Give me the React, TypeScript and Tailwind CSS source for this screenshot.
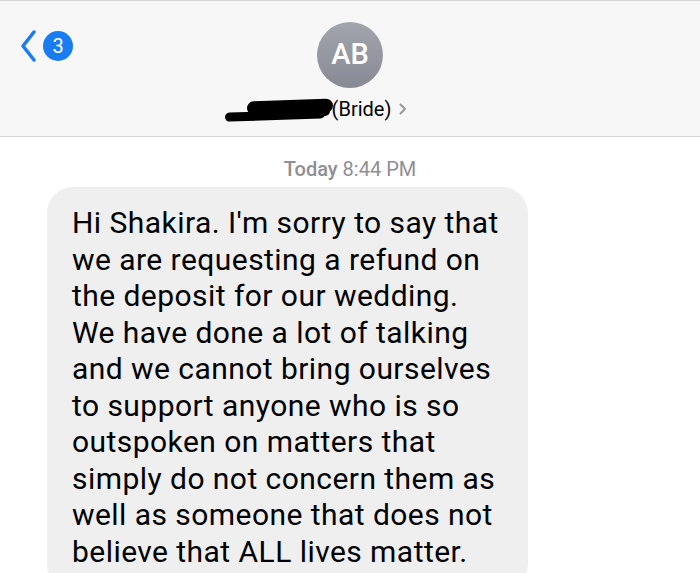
const lines = [
  "Hi Shakira. I'm sorry to say that",
  'we are requesting a refund on',
  'the deposit for our wedding.',
  'We have done a lot of talking',
  'and we cannot bring ourselves',
  'to support anyone who is so',
  'outspoken on matters that',
  'simply do not concern them as',
  'well as someone that does not',
  'believe that ALL lives matter.',
];

export default function App() {
  return (
    <div className="h-[573px] w-[700px] overflow-hidden bg-white font-['Roboto',sans-serif]">
      {/* Header */}
      <div className="relative flex h-[137px] flex-col items-center border-b border-t border-[#d4d4d6] bg-[#f7f7f7]">
        <div className="absolute left-[19px] top-[28px] flex items-center">
          <svg width="18" height="34" viewBox="0 0 18 34" fill="none">
            <path d="M15 3 L4 17 L15 31" stroke="#1a7cf2" strokeWidth="3.5" strokeLinecap="round" strokeLinejoin="round" />
          </svg>
          <div className="ml-[6px] flex h-[30px] w-[30px] items-center justify-center rounded-full bg-[#1a7cf2] text-[20px] text-white">
            3
          </div>
        </div>
        <div className="mt-[21px] flex h-[66px] w-[66px] items-center justify-center rounded-full bg-gradient-to-b from-[#a3a5ae] to-[#878a94] text-[29px] font-medium text-white">
          AB
        </div>
        <div className="mt-[8px] flex items-center pr-[68px]">
          <div className="relative h-[26px] w-[107px]">
            <div className="absolute left-[0px] top-[15px] h-[9px] w-[100px] -rotate-2 rounded-full bg-black" />
            <div className="absolute left-[22px] top-[4px] h-[14px] w-[86px] -rotate-2 rounded-full bg-black" />
            <div className="absolute left-[30px] top-[10px] h-[10px] w-[75px] rounded-full bg-black" />
          </div>
          <span className="text-[20px] leading-none text-black">(Bride)</span>
          <svg className="ml-[8px]" width="8" height="12" viewBox="0 0 8 12" fill="none">
            <path d="M1.5 1.5 L6 6 L1.5 10.5" stroke="#9a9a9e" strokeWidth="2" strokeLinecap="round" strokeLinejoin="round" />
          </svg>
        </div>
      </div>

      {/* Timestamp */}
      <div className="mt-[21px] text-center text-[20px] leading-[22px] text-[#8e8e93]">
        <span className="font-medium">Today</span> 8:44 PM
      </div>

      {/* Bubble */}
      <div className="ml-[47px] mt-[7px] w-[481px] rounded-[26px] bg-[#efefef] pb-[20px] pl-[25px] pr-[10px] pt-[18px]">
        {lines.map((line) => (
          <div key={line} className="whitespace-nowrap text-[30px] leading-[36.5px] tracking-[0.45px] text-black">
            {line}
          </div>
        ))}
      </div>
    </div>
  );
}
